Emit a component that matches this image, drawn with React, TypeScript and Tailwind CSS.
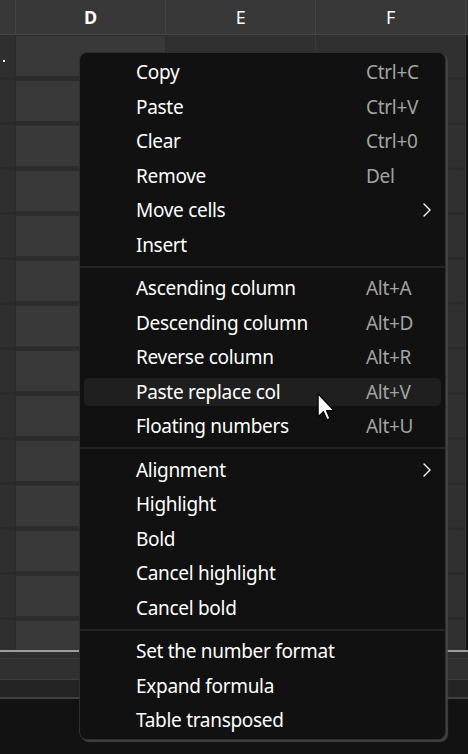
import { ChevronRight } from 'lucide-react'

type Item = { label: string; key?: string; sub?: boolean; active?: boolean }

const groups: Item[][] = [
  [
    { label: 'Copy', key: 'Ctrl+C' },
    { label: 'Paste', key: 'Ctrl+V' },
    { label: 'Clear', key: 'Ctrl+0' },
    { label: 'Remove', key: 'Del' },
    { label: 'Move cells', sub: true },
    { label: 'Insert' },
  ],
  [
    { label: 'Ascending column', key: 'Alt+A' },
    { label: 'Descending column', key: 'Alt+D' },
    { label: 'Reverse column', key: 'Alt+R' },
    { label: 'Paste replace col', key: 'Alt+V', active: true },
    { label: 'Floating numbers', key: 'Alt+U' },
  ],
  [
    { label: 'Alignment', sub: true },
    { label: 'Highlight' },
    { label: 'Bold' },
    { label: 'Cancel highlight' },
    { label: 'Cancel bold' },
  ],
  [
    { label: 'Set the number format' },
    { label: 'Expand formula' },
    { label: 'Table transposed' },
  ],
]

const rows = Array.from({ length: 14 })

function MenuRow({ item }: { item: Item }) {
  return (
    <div className="h-[34.5px] px-[4px] py-[3px]">
      <div
        className={`relative h-full rounded-[5px] flex items-center ${item.active ? 'bg-[#1f1f1f]' : ''}`}
      >
        <span className="pl-[52px] text-white">{item.label}</span>
        {item.key && (
          <span className="absolute left-[282px] text-[#a3a3a3]">{item.key}</span>
        )}
        {item.sub && (
          <ChevronRight
            size={24}
            strokeWidth={1.4}
            className="absolute left-[331px] text-white"
          />
        )}
      </div>
    </div>
  )
}

export default function App() {
  return (
    <div className="relative w-[468px] h-[754px] overflow-hidden bg-[#121212] font-['Noto_Sans','Open_Sans',sans-serif] text-[19px] tracking-[-0.3px]">
      {/* Column header */}
      <div className="flex h-[35px] bg-[#383838] border-b border-[#464646] text-white text-[18px]">
        <div className="w-[16px] border-r border-[#444]" />
        <div className="w-[150px] border-r border-[#444] flex items-center justify-center font-bold">D</div>
        <div className="w-[150px] border-r border-[#444] flex items-center justify-center">E</div>
        <div className="w-[150px] border-r border-[#444] flex items-center justify-center">F</div>
      </div>

      {/* Cells */}
      <div className="flex h-[615px] overflow-hidden">
        <div className="relative w-[16px] shrink-0 bg-[#2f2f2f] border-r border-[#2a2a2a]">
          {rows.map((_, i) => (
            <div key={i} className="h-[45px] border-b-[3px] border-[#2a2a2a]" />
          ))}
          <div className="absolute left-[3px] top-[25px] w-[2px] h-[2px] bg-white" />
        </div>
        <div className="w-[150px] shrink-0 bg-[#2c2c2c]">
          {rows.map((_, i) => (
            <div key={i} className="h-[45px] pt-[1px] pr-[1px]">
              <div className="h-[40px] bg-[#393939]" />
            </div>
          ))}
        </div>
        {[0, 1].map(c => (
          <div key={c} className="w-[150px] shrink-0 border-r border-[#3a3a3a]">
            {rows.map((_, i) => (
              <div key={i} className="h-[45px] bg-[#303030] border-b-[3px] border-[#2a2a2a]" />
            ))}
          </div>
        ))}
      </div>

      {/* Bottom bars */}
      <div className="h-[2px] bg-[#9c9c9c]" />
      <div className="h-[6px] bg-[#2e2e2e]" />
      <div className="h-[1px] bg-[#3a3a3a]" />
      <div className="h-[20px] bg-[#303030]" />
      <div className="h-[1px] bg-[#3e3e3e]" />
      <div className="h-[17px] bg-[#232323]" />
      <div className="h-[2px] bg-[#404040]" />

      {/* Context menu */}
      <div className="absolute left-[79px] top-[52px] w-[367px] rounded-[8px] bg-[#111111] border border-[#2e2e2e] shadow-[2px_2px_1px_rgba(70,70,70,0.9)] pt-[2px] pb-[1px]">
        {groups.map((g, gi) => (
          <div key={gi}>
            {gi > 0 && (
              <div className="h-[9px] flex items-center">
                <div className="h-[2px] w-full bg-[#242424]" />
              </div>
            )}
            {g.map(item => (
              <MenuRow key={item.label} item={item} />
            ))}
          </div>
        ))}
      </div>

      {/* Mouse pointer */}
      <svg
        className="absolute left-[317px] top-[393px]"
        width="19"
        height="29"
        viewBox="0 0 12 19"
      >
        <path
          d="M0.5 0.5 L0.5 15.5 L4 12.2 L6.3 17.6 L8.3 16.8 L6 11.5 L10.8 11.5 Z"
          fill="#ffffff"
          stroke="#000000"
          strokeWidth="0.8"
          strokeLinejoin="round"
        />
      </svg>
    </div>
  )
}
